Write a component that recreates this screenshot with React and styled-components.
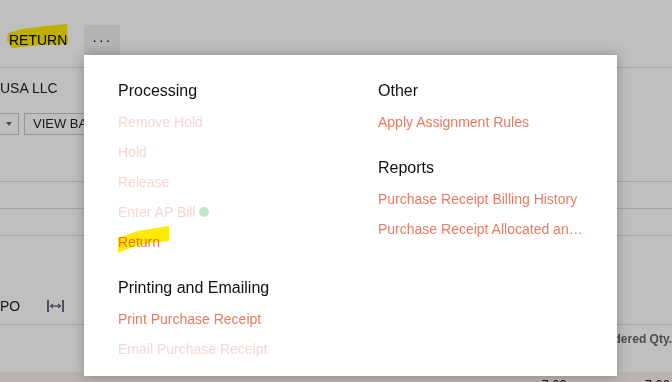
import React from 'react';
import styled, { createGlobalStyle } from 'styled-components';

const GlobalStyle = createGlobalStyle`
	html, body {
		margin: 0;
		padding: 0;
		background: #fff;
	}
	body {
		font-family: 'Liberation Sans', Arial, sans-serif;
		overflow: hidden;
	}
`;

// 뒤쪽 화면 전체
const Screen = styled.div`
	position: relative;
	width: 672px;
	height: 382px;
	overflow: hidden;
	background: #fff;
`;

const Toolbar = styled.div`
	display: flex;
	align-items: flex-end;
	height: 68px;
	padding: 0 0 12px 0;
	box-sizing: border-box;
	border-bottom: 1px solid #dcdcdc;
`;

const ToolButton = styled.div`
	display: flex;
	align-items: center;
	justify-content: center;
	height: 30px;
	padding: ${(p) => (p.$more ? '0' : '0 17px 0 9px')};
	width: ${(p) => (p.$more ? '36px' : 'auto')};
	background: ${(p) => (p.$more ? '#f0f0f0' : 'transparent')};
	font-size: 14px;
	color: #000;
	letter-spacing: ${(p) => (p.$more ? '2px' : '0')};
`;

const FormArea = styled.div`
	display: flex;
	flex-direction: column;
	padding-top: 11px;
	height: 114px;
	box-sizing: border-box;
	border-bottom: 1px solid #dcdcdc;
`;

const Label = styled.div`
	font-size: 14px;
	color: #222;
	height: 18px;
	line-height: 18px;
`;

const FieldRow = styled.div`
	display: flex;
	gap: 5px;
	margin-top: 16px;
`;

const SelectTail = styled.div`
	width: 18px;
	height: 20px;
	border: 1px solid #c8c8c8;
	border-left: none;
	display: flex;
	align-items: center;
	justify-content: center;
	&::after {
		content: '';
		border-left: 3px solid transparent;
		border-right: 3px solid transparent;
		border-top: 4px solid #666;
	}
`;

const FieldButton = styled.div`
	height: 20px;
	padding: 0 8px;
	border: 1px solid #c8c8c8;
	font-size: 13px;
	line-height: 20px;
	color: #222;
	white-space: nowrap;
`;

const GridLine = styled.div`
	height: 26px;
	border-bottom: 1px solid #dcdcdc;
`;

const GridBar = styled.div`
	display: flex;
	align-items: center;
	gap: 27px;
	height: 36px;
	margin-top: 52px;
	border-bottom: 1px solid #dcdcdc;
	font-size: 14px;
	color: #222;
`;

const HeaderRow = styled.div`
	display: flex;
	justify-content: flex-end;
	height: 47px;
	padding-top: 7px;
	box-sizing: border-box;
	font-size: 12px;
	font-weight: 700;
	color: #666;
`;

const DataRow = styled.div`
	display: flex;
	justify-content: flex-end;
	gap: 78px;
	height: 30px;
	padding: 5px 2px 0 0;
	box-sizing: border-box;
	background: #fbeeee;
	font-size: 13px;
	color: #222;
`;

// 어두운 덮개
const Dim = styled.div`
	position: absolute;
	inset: 0;
	background: rgba(0, 0, 0, 0.25);
`;

// 메뉴 패널
const Menu = styled.div`
	position: absolute;
	left: 84px;
	top: 55px;
	width: 533px;
	height: 321px;
	box-sizing: border-box;
	padding: 26px 33px 0 34px;
	background: #fff;
	box-shadow: 0 0 12px rgba(0, 0, 0, 0.28);
	display: grid;
	grid-template-columns: 260px 206px;
`;

const Column = styled.div`
	display: flex;
	flex-direction: column;
`;

const Group = styled.div`
	display: flex;
	flex-direction: column;
	& + & {
		margin-top: 21px;
	}
`;

const Heading = styled.div`
	font-size: 16px;
	line-height: 20px;
	height: 20px;
	color: #111;
	margin-bottom: 6px;
`;

const Item = styled.div`
	display: flex;
	align-items: center;
	gap: 3px;
	height: 30px;
	font-size: 14px;
	color: ${(p) => (p.$disabled ? '#f8d6d0' : '#ec7a61')};
	white-space: nowrap;
`;

const StatusDot = styled.span`
	width: 10px;
	height: 10px;
	border-radius: 50%;
	background: #c3e4cc;
	flex: none;
`;

// 노란 형광펜 표시
const Marker = styled.svg`
	position: absolute;
	left: 0;
	top: 0;
	width: 672px;
	height: 382px;
	mix-blend-mode: multiply;
	pointer-events: none;
`;

const processing = [
	{ label: 'Remove Hold', disabled: true },
	{ label: 'Hold', disabled: true },
	{ label: 'Release', disabled: true },
	{ label: 'Enter AP Bill', disabled: true, dot: true },
	{ label: 'Return' },
];

const printing = [
	{ label: 'Print Purchase Receipt' },
	{ label: 'Email Purchase Receipt', disabled: true },
];

const other = [{ label: 'Apply Assignment Rules' }];

const reports = [
	{ label: 'Purchase Receipt Billing History' },
	{ label: 'Purchase Receipt Allocated an…' },
];

const MenuGroup = ({ title, items }) => (
	<Group>
		<Heading>{title}</Heading>
		{items.map((it) => (
			<Item key={it.label} $disabled={it.disabled}>
				<span>{it.label}</span>
				{it.dot && <StatusDot />}
			</Item>
		))}
	</Group>
);

const FitIcon = () => (
	<svg width="17" height="14" viewBox="0 0 17 14">
		<path d="M1 1v12M16 1v12" stroke="#2a2440" strokeWidth="1.4" />
		<path d="M3.5 7h10" stroke="#2a2440" strokeWidth="1" />
		<path d="M3.5 7l2.5-2.2M3.5 7l2.5 2.2M13.5 7l-2.5-2.2M13.5 7l-2.5 2.2" stroke="#2a2440" strokeWidth="1" fill="none" />
	</svg>
);

const App = () => {
	return (
		<Screen>
			<GlobalStyle />
			<Toolbar>
				<ToolButton>RETURN</ToolButton>
				<ToolButton $more>···</ToolButton>
			</Toolbar>
			<FormArea>
				<Label>USA LLC</Label>
				<FieldRow>
					<SelectTail />
					<FieldButton>VIEW BASE</FieldButton>
				</FieldRow>
			</FormArea>
			<GridLine />
			<GridLine />
			<GridBar>
				<span>PO</span>
				<FitIcon />
			</GridBar>
			<HeaderRow>
				<span>Ordered Qty.</span>
			</HeaderRow>
			<DataRow>
				<span>7.00</span>
				<span>7.00</span>
			</DataRow>
			<Dim />
			<Menu>
				<Column>
					<MenuGroup title="Processing" items={processing} />
					<MenuGroup title="Printing and Emailing" items={printing} />
				</Column>
				<Column>
					<MenuGroup title="Other" items={other} />
					<MenuGroup title="Reports" items={reports} />
				</Column>
			</Menu>
			<Marker viewBox="0 0 672 382">
				<path
					d="M8 33 L22 29 L45 26 L67 24 L68 44 L42 45 L12 48 L7 41 Z"
					fill="#ffea00"
				/>
				<path
					d="M118 238 L138 231 L169 226 L169 241 L150 243 L136 246 L122 251 L118 253 Z"
					fill="#ffea00"
				/>
			</Marker>
		</Screen>
	);
};

export default App;
